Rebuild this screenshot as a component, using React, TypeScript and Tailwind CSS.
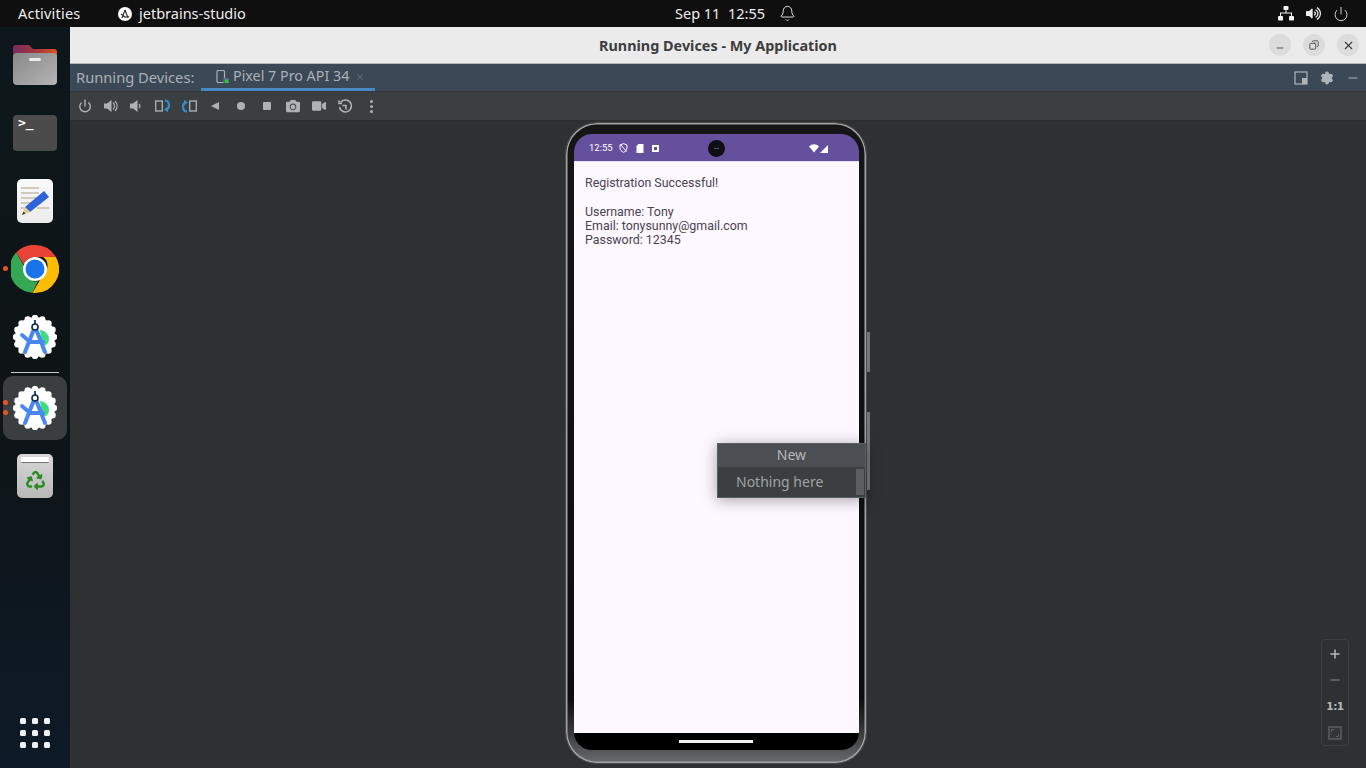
import { Bell, Power, Settings, X, Plus, Minus, Copy } from "lucide-react";
import { FaRecycle, FaVideo, FaCamera, FaVolumeUp } from "react-icons/fa";

const uiFont = { fontFamily: '"Noto Sans", sans-serif' };

const AndroidStudioIcon = ({ size = 44 }: { size?: number }) => {
  const scallops = Array.from({ length: 16 }, (_, i) => {
    const a = (i / 16) * Math.PI * 2;
    return { cx: 22 + Math.cos(a) * 19, cy: 22 + Math.sin(a) * 19 };
  });
  return (
    <svg width={size} height={size} viewBox="0 0 44 44">
      <circle cx="22" cy="22" r="20" fill="#fff" />
      {scallops.map((s, i) => (
        <circle key={i} cx={s.cx} cy={s.cy} r="3.2" fill="#fff" />
      ))}
      <path d="M27 15a9 9 0 0 1 9 9c0 3-1.500 5-3 6h-4z" fill="#3ddc84" />
      <path d="M21 14 L12 37 M23 14 L32 37" stroke="#4a86f0" strokeWidth="4" strokeLinecap="round" />
      <path d="M9 20 L17 27 H30" stroke="#4a86f0" strokeWidth="3.800" fill="none" strokeLinecap="round" strokeLinejoin="round" />
      <rect x="21" y="5" width="2" height="6" fill="#1d4f91" />
      <circle cx="22" cy="12" r="3" fill="#fff" stroke="#0f2a44" strokeWidth="1.600" />
    </svg>
  );
};

const ChromeIcon = () => (
  <svg width="48" height="48" viewBox="0 0 48 48">
    <path d="M24 0a24 24 0 0 1 20.800 12H24a12 12 0 0 0-11.200 7.600L5.200 7.400A24 24 0 0 1 24 0z" fill="#ea4335" />
    <path d="M5.200 7.400l10.400 18A9 9 0 0 0 27 36l-5.600 11.800A24 24 0 0 1 5.200 7.400z" fill="#34a853" />
    <path d="M44.800 12A24 24 0 0 1 24 48h-2.600L33 28a10 10 0 0 0-1-16z" fill="#fbbc04" />
    <circle cx="24" cy="24" r="12" fill="#fff" />
    <circle cx="24" cy="24" r="9.500" fill="#1a73e8" />
  </svg>
);

const FolderIcon = () => (
  <svg width="44" height="40" viewBox="0 0 44 40">
    <defs>
      <linearGradient id="folderTab" x1="0" x2="1" y1="0" y2="0">
        <stop offset="0" stopColor="#7a2a5c" />
        <stop offset="0.6" stopColor="#a83a3a" />
        <stop offset="1" stopColor="#e0561f" />
      </linearGradient>
      <linearGradient id="folderBody" x1="0" x2="1" y1="0" y2="1">
        <stop offset="0" stopColor="#888" />
        <stop offset="1" stopColor="#b5b5b5" />
      </linearGradient>
    </defs>
    <path d="M0 14V3a3 3 0 0 1 3-3h12a3 3 0 0 1 2 1l3 3h21a3 3 0 0 1 3 3v7z" fill="url(#folderTab)" />
    <rect x="0" y="8" width="44" height="32" rx="4" fill="url(#folderBody)" />
    <rect x="16" y="13" width="12" height="3" rx="1.500" fill="#eee" />
  </svg>
);

const EditorIcon = () => (
  <div className="h-[44px] w-[36px] overflow-hidden rounded-[5px] bg-gradient-to-b from-[#fafafa] to-[#ebebeb]">
    <svg width="36" height="44" viewBox="0 0 36 44">
      <g fill="#cfcabc">
        <rect x="4" y="8" width="18" height="2" />
        <rect x="4" y="13" width="18" height="2" />
        <rect x="4" y="18" width="18" height="2" />
        <rect x="4" y="23" width="14" height="2" />
        <rect x="4" y="28" width="7" height="2" />
        <rect x="20" y="28" width="12" height="2" />
      </g>
      <path d="M27 12l5 6-19 15-5-5z" fill="#2f62d9" />
      <path d="M8 28l5 5-8 3z" fill="#e9c98f" />
      <path d="M6.500 32.500l2 2-3.500 1.500z" fill="#333" />
    </svg>
  </div>
);

const TrashIcon = () => (
  <div className="flex h-[44px] w-[36px] flex-col items-center rounded-[5px] bg-gradient-to-b from-[#d8d8d8] to-[#b8b8b8]">
    <div className="mt-[3px] h-[6px] w-[28px] rounded-[1px] border-b border-[#777] bg-white" />
    <FaRecycle className="mt-[8px] text-[#2a8a22]" size={19} />
  </div>
);

const AppGrid = () => (
  <div className="grid grid-cols-3 gap-[6px]">
    {Array.from({ length: 9 }, (_, i) => (
      <span key={i} className="h-[6px] w-[6px] rounded-[1.5px] bg-[#f1f1f1]" />
    ))}
  </div>
);

const Dock = () => (
  <aside className="relative flex w-[70px] shrink-0 flex-col items-center bg-gradient-to-b from-[#0d171b] via-[#0e1416] to-[#0e1a27] pt-[18px]">
    <FolderIcon />
    <div className="mt-[30px] h-[36px] w-[44px] rounded-[4px] bg-[#4b4b4b] pl-[5px] text-[13px] font-bold leading-[15px] text-white" style={{ fontFamily: '"DejaVu Sans Mono", monospace' }}>
      &gt;_
    </div>
    <div className="mt-[28px]">
      <EditorIcon />
    </div>
    <div className="mt-[22px]">
      <ChromeIcon />
    </div>
    <div className="mt-[22px]">
      <AndroidStudioIcon />
    </div>
    <div className="mt-[13px] h-px w-[48px] bg-[#c8c8c8]" />
    <div className="mt-[3px] flex h-[64px] w-[64px] items-center justify-center rounded-[10px] bg-[#3b3e40]">
      <AndroidStudioIcon />
    </div>
    <div className="mt-[14px]">
      <TrashIcon />
    </div>
    <div className="mt-auto mb-[20px]">
      <AppGrid />
    </div>
    <span className="absolute left-[3px] top-[239px] h-[5px] w-[5px] rounded-full bg-[#e95420]" />
    <span className="absolute left-[3px] top-[373px] h-[5px] w-[5px] rounded-full bg-[#e95420]" />
    <span className="absolute left-[3px] top-[383px] h-[5px] w-[5px] rounded-full bg-[#e95420]" />
  </aside>
);

const TopBar = () => (
  <header className="flex h-[27px] shrink-0 items-center bg-[#0f0f0f] text-[14.5px] text-[#eeeeee]" style={uiFont}>
    <span className="ml-[18px] w-[63px] tracking-[0.2px]">Activities</span>
    <span className="ml-[37px] flex h-[14px] w-[14px] items-center justify-center rounded-full bg-white">
      <svg width="10" height="10" viewBox="0 0 10 10">
        <path d="M5 1L2 9M5 1l3 8M1 5l4 3 4-.5" stroke="#333" strokeWidth="1.200" fill="none" />
      </svg>
    </span>
    <span className="ml-[7px] w-[107px]">jetbrains-studio</span>
    <span className="ml-[429px] w-[88px] whitespace-pre">Sep 11  12:55</span>
    <Bell className="ml-[16px]" size={17} strokeWidth={1.300} />
    <div className="ml-auto mr-[17px] flex items-center gap-[12px]">
      <svg width="16" height="15" viewBox="0 0 16 15" fill="#f2f2f2">
        <rect x="5.500" y="0" width="5" height="4" rx="0.800" />
        <rect x="0" y="10" width="5" height="4.500" rx="0.800" />
        <rect x="11" y="10" width="5" height="4.500" rx="0.800" />
        <path d="M7.500 4h1v2.500h5.500V10h-1V7.500H3V10H2V6.500h5.500z" />
      </svg>
      <FaVolumeUp className="text-[#eeeeee]" size={15} />
      <Power size={16} strokeWidth={1.300} />
    </div>
  </header>
);

const TitleBar = () => (
  <div className="relative flex h-[37px] shrink-0 items-center justify-center border-b border-[#b5b5b5] bg-[#ebebeb] pt-[2px]">
    <span className="text-[14.4px] font-bold text-[#3d3d3d]" style={uiFont}>
      Running Devices - My Application
    </span>
    <div className="absolute right-[7px] top-[7px] flex gap-[12px]">
      <button className="flex h-[22px] w-[22px] items-center justify-center rounded-full bg-[#dcdcdc]">
        <Minus className="mt-[5px] text-[#3d3d3d]" size={10} />
      </button>
      <button className="flex h-[22px] w-[22px] items-center justify-center rounded-full bg-[#dcdcdc]">
        <Copy className="scale-x-[-1] text-[#3d3d3d]" size={10} />
      </button>
      <button className="flex h-[22px] w-[22px] items-center justify-center rounded-full bg-[#dcdcdc]">
        <X className="text-[#3d3d3d]" size={13} />
      </button>
    </div>
  </div>
);

const TabBar = () => (
  <div className="flex h-[28px] shrink-0 items-stretch border-b border-[#32363a] bg-[#3d4856] text-[#a9b0b7]" style={uiFont}>
    <span className="ml-[6px] flex w-[125px] items-center text-[14.7px]">Running Devices:</span>
    <div className="flex w-[174px] items-center border-b-[3px] border-[#4a88c7] pl-[15px] text-[14.3px]">
      <svg width="14" height="15" viewBox="0 0 14 15" className="shrink-0">
        <rect x="1" y="1.500" width="7.500" height="12" rx="1" fill="none" stroke="#a9b0b7" strokeWidth="1.200" />
        <rect x="7.500" y="9" width="5" height="5" fill="#6b5a9a" />
        <rect x="9" y="10.500" width="3.500" height="3.500" fill="#22d321" />
      </svg>
      <span className="ml-[3px] whitespace-nowrap">Pixel 7 Pro API 34</span>
      <X className="ml-[6px] mt-[2px] text-[#6c747c]" size={10} />
    </div>
    <div className="ml-auto mr-[6px] flex items-center gap-[12px] text-[#aeb4ba]">
      <svg width="14" height="14" viewBox="0 0 14 14">
        <rect x="1" y="1" width="12" height="12" fill="none" stroke="#aeb4ba" strokeWidth="1.200" />
        <rect x="8" y="7" width="5" height="6" fill="#aeb4ba" />
      </svg>
      <Settings size={14} fill="#aeb4ba" />
      <Minus size={14} />
    </div>
  </div>
);

const RotateIcon = ({ turned }: { turned?: boolean }) => (
  <svg width="16" height="14" viewBox="0 0 16 14" className={turned ? "rotate-180" : ""}>
    <rect x="0.700" y="2" width="6.600" height="10" fill="none" stroke="#afb1b3" strokeWidth="1.300" />
    <path d="M10 1.500c5 .5 5 7 1.500 9" fill="none" stroke="#2f8fce" strokeWidth="2.200" />
    <path d="M9 10.500l4-2.800v5.600z" fill="#2f8fce" />
  </svg>
);

const VolumeIcon = ({ loud }: { loud?: boolean }) => (
  <svg width="14" height="14" viewBox="0 0 14 14" fill="#afb1b3">
    <path d="M0 4.500h3L7.500 1v12L3 9.500H0z" />
    {loud && <path d="M9 3.500a5 5 0 0 1 0 7M11 2a7 7 0 0 1 0 10" fill="none" stroke="#afb1b3" strokeWidth="1.200" />}
    {!loud && <path d="M9 5a3 3 0 0 1 0 4" fill="none" stroke="#afb1b3" strokeWidth="1.200" />}
  </svg>
);

const ToolbarSlot = ({ children }: { children: React.ReactNode }) => (
  <div className="flex w-[26px] items-center justify-center">{children}</div>
);

const Toolbar = () => (
  <div className="flex h-[29px] shrink-0 items-center border-b border-[#2b2d2f] bg-[#3c3f41] pl-[2px] text-[#afb1b3]">
    <ToolbarSlot><Power size={14} strokeWidth={2.400} /></ToolbarSlot>
    <ToolbarSlot><VolumeIcon loud /></ToolbarSlot>
    <ToolbarSlot><VolumeIcon /></ToolbarSlot>
    <ToolbarSlot><RotateIcon /></ToolbarSlot>
    <ToolbarSlot><RotateIcon turned /></ToolbarSlot>
    <ToolbarSlot>
      <svg width="10" height="10" viewBox="0 0 10 10" fill="#afb1b3"><path d="M9 1v8L1 5z" /></svg>
    </ToolbarSlot>
    <ToolbarSlot><span className="h-[8px] w-[8px] rounded-full bg-[#afb1b3]" /></ToolbarSlot>
    <ToolbarSlot><span className="h-[8px] w-[8px] rounded-[1px] bg-[#afb1b3]" /></ToolbarSlot>
    <ToolbarSlot><FaCamera size={14} /></ToolbarSlot>
    <ToolbarSlot><FaVideo size={14} /></ToolbarSlot>
    <ToolbarSlot>
      <svg width="15" height="15" viewBox="0 0 15 15" fill="none" stroke="#afb1b3" strokeWidth="1.600">
        <path d="M2.500 3.500A6 6 0 1 1 1.500 8" />
        <path d="M1 1.500v3h3" />
        <path d="M4.500 6.500h3.500v4" />
      </svg>
    </ToolbarSlot>
    <ToolbarSlot>
      <div className="flex flex-col gap-[2px]">
        <span className="h-[3px] w-[3px] rounded-full bg-[#afb1b3]" />
        <span className="h-[3px] w-[3px] rounded-full bg-[#afb1b3]" />
        <span className="h-[3px] w-[3px] rounded-full bg-[#afb1b3]" />
      </div>
    </ToolbarSlot>
  </div>
);

const StatusBar = () => (
  <div className="flex h-[28px] shrink-0 items-center border-b border-[#e8def8] bg-[#65509e] pt-[1px] text-white">
    <span className="ml-[15px] text-[9.5px]" style={{ fontFamily: "Roboto, sans-serif" }}>12:55</span>
    <svg width="9" height="10" viewBox="0 0 9 10" className="ml-[6px]">
      <path d="M4.500.6L8 2v3c0 2-1.500 3.400-3.500 4.300C2.500 8.400 1 7 1 5V2zM1.500 1.500l6 7" fill="none" stroke="#fff" strokeWidth="1" />
    </svg>
    <svg width="8" height="9" viewBox="0 0 8 9" className="ml-[8px]"><path d="M2.500 0H7.500V9H.5V2z" fill="#fff" /></svg>
    <span className="ml-[8px] flex h-[7px] w-[7px] items-center justify-center bg-white">
      <span className="h-[3px] w-[3px] bg-[#65509e]" />
    </span>
    <span className="ml-[49px] flex h-[17px] w-[17px] items-center justify-center rounded-full bg-[#0e0e14]">
      <span className="h-[1px] w-[5px] bg-[#44516b]" />
    </span>
    <svg width="20" height="9" viewBox="0 0 20 9" className="ml-[84px]" fill="#fff">
      <path d="M0 2.500C3-.500 7-.500 10 2.500L5 8.500z" />
      <path d="M11 9h8V1z" />
    </svg>
  </div>
);

const SidePopup = () => (
  <div className="absolute left-[151px] top-[320px] z-10 h-[55px] w-[149px] border border-[#5c5f62] bg-[#3c3f41] text-[14px] text-[#9ea2a5] shadow-[0_2px_14px_rgba(0,0,0,0.35)]" style={uiFont}>
    <div className="flex h-[23px] items-center justify-center bg-[#4b4e52] pb-[2px] text-[#b4b7ba]">New</div>
    <div className="flex h-[30px] items-center justify-between pl-[18px] pr-[1px]">
      <span className="-mt-[2px]">Nothing here</span>
      <span className="h-[26px] w-[8px] bg-[#5c5f61]" />
    </div>
  </div>
);

const Phone = () => (
  <div className="relative ml-[495px] mt-[1px] h-[642px] w-[302px] rounded-[32px] border border-[#4a4b4d] bg-gradient-to-b from-[#161616] via-[#0d0d0d] via-90% to-[#6a6b6d] pb-[13px] pl-[8px] pr-[7px] pt-[11px] shadow-[inset_0_0_0_1.5px_#a2a2a2]">
    <div className="flex h-[616px] w-[285px] flex-col overflow-hidden rounded-[18px] bg-black">
      <StatusBar />
      <div className="h-[571px] shrink-0 bg-[#fdf7ff] px-[11px] pt-[14px] text-[12.4px] leading-[14px] text-[#49454f]" style={{ fontFamily: "Roboto, sans-serif" }}>
        <p>Registration Successful!</p>
        <p className="mt-[15px]">Username: Tony</p>
        <p>Email: tonysunny@gmail.com</p>
        <p>Password: 12345</p>
      </div>
      <div className="flex flex-1 justify-center pr-[2px] pt-[7px]">
        <span className="h-[3px] w-[74px] bg-[#f2f2f2]" />
      </div>
    </div>
    <span className="absolute left-[301px] top-[209px] h-[40px] w-[3px] rounded-r-[1px] bg-[#77787a]" />
    <span className="absolute left-[301px] top-[289px] h-[78px] w-[3px] rounded-r-[1px] bg-[#77787a]" />
    <SidePopup />
  </div>
);

const ZoomControls = () => (
  <div className="absolute bottom-[22px] right-[17px] flex h-[107px] w-[28px] flex-col items-center rounded-[4px] border border-[#3d3f41] pt-[7px] text-[#b5b7b9]">
    <Plus size={14} strokeWidth={2.600} />
    <Minus className="mt-[12px] text-[#6a6c6e]" size={14} strokeWidth={2.600} />
    <span className="mt-[13px] text-[10.5px] font-bold leading-[12px] tracking-[-0.5px]" style={{ fontFamily: '"DejaVu Sans", sans-serif' }}>1:1</span>
    <svg width="14" height="14" viewBox="0 0 14 14" className="mt-[14px]" fill="none">
      <rect x="1" y="1" width="12" height="12" fill="#333537" stroke="#5c5e60" strokeWidth="1.500" />
      <path d="M3.500 6V3.500H6M10.500 8v2.500H8" stroke="#5c5e60" strokeWidth="1" />
    </svg>
  </div>
);

export default function App() {
  return (
    <div className="flex h-[768px] w-[1366px] flex-col overflow-hidden">
      <TopBar />
      <div className="flex min-h-0 flex-1">
        <Dock />
        <main className="flex min-w-0 flex-1 flex-col">
          <TitleBar />
          <TabBar />
          <Toolbar />
          <div className="relative flex-1 bg-[#2f3032]">
            <Phone />
            <ZoomControls />
          </div>
        </main>
      </div>
    </div>
  );
}
